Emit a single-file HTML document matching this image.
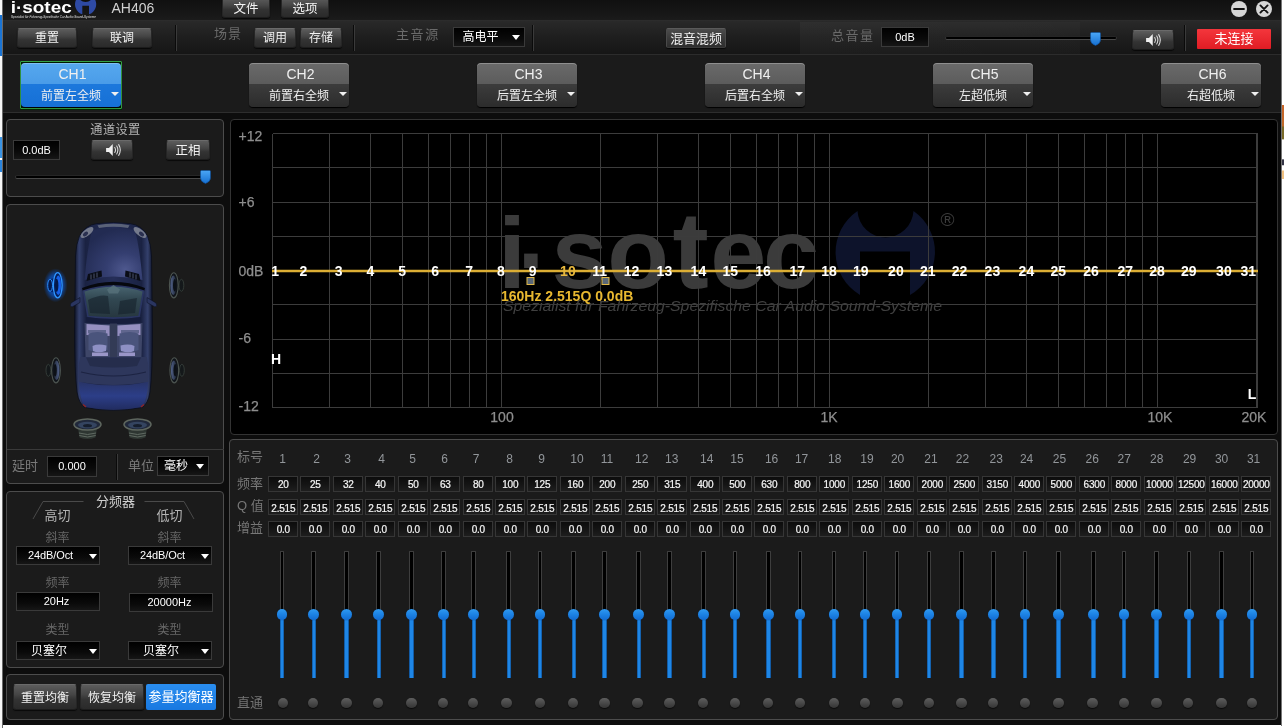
<!DOCTYPE html><html lang="zh"><head><meta charset="utf-8"><title>i-sotec AH406</title><style>
*{box-sizing:border-box;margin:0;padding:0}
html,body{width:1284px;height:728px;overflow:hidden;background:#fff}
body{position:relative;font-family:"Liberation Sans","Noto Sans CJK SC",sans-serif;color:#e8e8e8;font-size:12px}
.a{position:absolute}
#win{left:3px;top:0;width:1278px;height:725px;background:#0d0d0d;overflow:hidden}
#fg{left:0;top:0;width:1279px;height:725px;will-change:transform}
#title{left:0;top:0;width:1279px;height:20px;background:linear-gradient(#101010,#151515 50%,#1b1b1b)}
#tool{left:0;top:20px;width:1279px;height:35px;background:linear-gradient(#292929,#1e1e1e 50%,#161616);border-top:1px solid #2c2c2c;border-bottom:1px solid #2c2c2c}
#chrow{left:0;top:55px;width:1279px;height:58px;background:#1b1b1b;border-bottom:1px solid #2e2e2e}
.btn{position:absolute;border:1px solid #262626;border-top-color:#6a6a6a;border-bottom-color:#1c1c1c;border-radius:3px;background:linear-gradient(#5c5c5c 0%,#454545 40%,#333 60%,#2a2a2a 100%);color:#f2f2f2;text-align:center;font-size:12px;box-shadow:0 1px 1px rgba(0,0,0,.7);white-space:nowrap}
.btn span{position:relative}
.lbl{position:absolute;color:#6a6a6a;font-size:13px;white-space:nowrap}
.box{position:absolute;background:linear-gradient(#000,#0a0a0a 60%,#161616);border:1px solid #3a3a3a;color:#fff;text-align:center;white-space:nowrap}
.sep{position:absolute;width:1px;background:#3a3a3a;box-shadow:-1px 0 0 #0a0a0a}
.panel{position:absolute;background:#1b1b1b;border:1px solid #4c4c4c;border-radius:4px}
.tri{position:absolute;width:0;height:0;border-left:4px solid transparent;border-right:4px solid transparent;border-top:5px solid #fff}
.tri.s{border-left-width:4.2px;border-right-width:4.2px;border-top-width:5.2px}
.ch{position:absolute;width:100px;height:44px;border-radius:4px;background:linear-gradient(#6a6a6a 0,#5c5c5c 47%,#3c3c3c 48%,#2c2c2c 100%);box-shadow:inset 0 1px 0 rgba(255,255,255,.25),0 1px 1px #000;text-align:center;color:#f0f0f0}
.ch .t{position:absolute;left:1.5px;width:100%;top:3px;font-size:14px;line-height:16px}
.ch .s{position:absolute;left:0;width:100%;top:24.5px;font-size:12px;line-height:16px;letter-spacing:0px}
.ch .tri{left:90px;top:29.3px;border-top-color:#f0f0f0;border-left-width:4px;border-right-width:4px;border-top-width:4.6px}
.ch.sel{background:linear-gradient(#56a8ee 0,#4a9ce8 47%,#1c78dc 48%,#1670d6 100%);}
.selbox{position:absolute;border:1px solid #35a045;border-radius:1px;background:#001c00;box-shadow:0 1px 0 #002600}
.cell{position:absolute;width:30px;height:16px;-webkit-text-stroke:0.22px #f4f4f4;background:linear-gradient(#0c0c0c,#141414 50%,#1e1e1e);border:1px solid #363636;color:#f4f4f4;font-size:10px;line-height:14px;padding:0.8px 0 0 0.6px;text-align:center;letter-spacing:-0.2px;white-space:nowrap;overflow:hidden}
.num{position:absolute;width:30px;text-align:center;color:#92969a;font-size:12px;line-height:14px}
.trk{position:absolute;width:4.6px;background:#000;border:0.8px solid #3e3e3e;border-bottom:0;border-radius:1px}
.fill{position:absolute;width:4.5px;background:linear-gradient(90deg,#0b3f7a,#1e86e6 25%,#1e86e6 75%,#0b3f7a)}
.knob{position:absolute;width:10.6px;height:10.6px;border-radius:6px;background:linear-gradient(#2f9af2,#1c82e4 50%,#136cd2);box-shadow:0 0 1px #0a2a55}
.dot{position:absolute;width:10.5px;height:10.5px;border-radius:6px;background:linear-gradient(#5e5e5e,#343434);box-shadow:0 1px 1px rgba(0,0,0,.6)}
.glbl{position:absolute;color:#8a8a8a;font-weight:bold;font-size:12px;white-space:nowrap}
</style></head><body>
<div class="a" style="left:0;top:0;width:3px;height:728px;background:linear-gradient(90deg,#f6f6f6 0,#f6f6f6 66%,#6a6a6a 67%)"></div>
<div class="a" style="left:0;top:15px;width:2px;height:41px;background:#1a74d4"></div>
<div class="a" style="left:0;top:137px;width:2px;height:35px;background:linear-gradient(#3a94e4 0,#3a94e4 60%,#fff 61%,#fff 66%,#2a84dc 67%)"></div>
<div class="a" style="left:1282px;top:105px;width:2px;height:74px;background:linear-gradient(#c86428 0,#c06a2a 28%,#7a6a28 30%,#7a6a28 46%,#fff 47%,#fff 73%,#334 74%,#334 81%,#fff 82%,#fff 88%,#f0c080 89%)"></div>
<div class="a" style="left:1281px;top:0;width:1px;height:726px;background:#777"></div>
<div id="win" class="a"><div id="fg" class="a">
<div id="title" class="a"></div>
<div id="tool" class="a"></div>
<div id="chrow" class="a"></div>
<div class="a" style="left:797px;top:22px;width:280px;height:32px;background:linear-gradient(90deg,rgba(255,255,255,.03),rgba(255,255,255,.02))"></div>
<svg class="a" style="left:0;top:0" width="110" height="20" viewBox="3 0 110 20" font-family="Liberation Sans, sans-serif"><text x="10.7" y="13.1" font-size="16.5" font-weight="bold" fill="#fff" textLength="61" lengthAdjust="spacingAndGlyphs">i·sotec</text><path d="M76.4 -1 A10.6 10.6 0 0 0 82.3 14.3 L82.3 5.7 L89 5.7 L89 14.3 A10.6 10.6 0 0 0 94.800 -1 L91.800 -1 A8 8 0 0 1 79.400 -1Z" fill="#2e4aa4"/><text x="11" y="18" font-size="3.6" font-style="italic" fill="#e0e0e0" textLength="85" lengthAdjust="spacingAndGlyphs">Spezialist für Fahrzeug-Spezifische Car Audio Sound-Systeme</text></svg>
<div class="a" style="left:108.5px;top:-1px;font-size:14px;line-height:18px;color:#d0d0d0">AH406</div>
<div class="btn" style="left:219px;top:-3px;width:48px;height:21px;line-height:22px;font-size:12.5px">文件</div>
<div class="btn" style="left:278px;top:-3px;width:48px;height:21px;line-height:22px;font-size:12.5px">选项</div>
<svg class="a" style="left:1227px;top:0" width="18" height="18" viewBox="0 0 18 18"><circle cx="9" cy="9" r="8" fill="#d6d6d6"/><rect x="3.2" y="8" width="11.6" height="2" rx="0.8" fill="#111"/></svg>
<svg class="a" style="left:1252px;top:0" width="18" height="18" viewBox="0 0 18 18"><circle cx="9" cy="9" r="8" fill="#d6d6d6"/><path d="M5.4 5.4 L12.6 12.6 M12.6 5.4 L5.4 12.6" stroke="#111" stroke-width="1.9" stroke-linecap="round"/></svg>
<div class="btn" style="left:14px;top:28px;width:60px;height:20px;line-height:18px;">重置</div>
<div class="btn" style="left:89px;top:28px;width:60px;height:20px;line-height:18px;">联调</div>
<div class="sep" style="left:173px;top:25px;height:26px"></div>
<div class="lbl" style="left:211px;top:25px;line-height:18px;letter-spacing:1px">场景</div>
<div class="btn" style="left:251px;top:28px;width:42px;height:20px;line-height:18px;">调用</div>
<div class="btn" style="left:297px;top:28px;width:42px;height:20px;line-height:18px;">存储</div>
<div class="sep" style="left:351px;top:25px;height:26px"></div>
<div class="lbl" style="left:393px;top:26px;line-height:18px;letter-spacing:1.6px">主音源</div>
<div class="box" style="left:450px;top:27px;width:72px;height:20px;line-height:19px;font-size:12px;text-align:left;padding-left:8.5px">高电平</div>
<div class="tri" style="left:509px;top:35px"></div>
<div class="sep" style="left:530px;top:25px;height:26px"></div>
<div class="btn" style="left:663px;top:28px;width:60px;height:20px;line-height:18px;border-radius:2px;border-color:#5a5a5a #4a4a4a #3a3a3a #4a4a4a;font-size:12.9px;line-height:20px;background:linear-gradient(#4c4c4c,#3a3a3a 50%,#2e2e2e)">混音混频</div>
<div class="lbl" style="left:828px;top:27px;line-height:18px;letter-spacing:1.5px">总音量</div>
<div class="box" style="left:878px;top:27px;width:48px;height:20px;line-height:18px;font-size:11px">0dB</div>
<div class="a" style="left:942px;top:36px;width:172px;height:4px;background:#000;border-top:1px solid #262626;border-bottom:1px solid #484848;border-left:1px solid #333;border-right:1px solid #333;border-radius:2px"></div>
<svg class="a" style="left:1087.3px;top:31.5px" width="11" height="14" viewBox="0 0 11 14"><defs><linearGradient id="tg1" x1="0" y1="0" x2="0" y2="1"><stop offset="0" stop-color="#4aa6f6"/><stop offset="1" stop-color="#166fd0"/></linearGradient></defs><path d="M1.5 0.5 h8 a1 1 0 0 1 1 1 v6.5 q0 3.6 -5 5.5 q-5 -1.9 -5 -5.5 v-6.500 a1 1 0 0 1 1 -1z" fill="url(#tg1)" stroke="#0d4f9a" stroke-width="0.6"/></svg>
<div class="btn" style="left:1129px;top:30px;width:42px;height:20px;line-height:18px;"></div>
<svg class="a" style="left:1140px;top:33px" width="19.5" height="14" viewBox="-2.5 0 22 14" preserveAspectRatio="none"><path d="M1 5 h3.2 l4.3 -4 v12 l-4.3 -4 h-3.2z" fill="#f0f0f0"/><path d="M10.8 4.5 q1.6 2.5 0 5 M13 3 q2.6 4 0 8 M15.2 1.6 q3.6 5.4 0 10.8" stroke="#e8e8e8" stroke-width="1.1" fill="none" stroke-linecap="round"/></svg>
<div class="sep" style="left:1182px;top:25px;height:26px"></div>
<div class="a" style="left:1194px;top:29px;width:74px;height:20px;background:linear-gradient(#f4363c,#e01c24);border-radius:1px;color:#fff;font-size:13px;line-height:19px;text-align:center;letter-spacing:0px">未连接</div>
<div class="selbox" style="left:17px;top:61px;width:102px;height:48px"></div>
<div class="ch sel" style="left:18px;top:63px"><div class="t">CH1</div><div class="s">前置左全频</div><div class="tri"></div></div>
<div class="ch" style="left:246px;top:63px"><div class="t">CH2</div><div class="s">前置右全频</div><div class="tri"></div></div>
<div class="ch" style="left:474px;top:63px"><div class="t">CH3</div><div class="s">后置左全频</div><div class="tri"></div></div>
<div class="ch" style="left:702px;top:63px"><div class="t">CH4</div><div class="s">后置右全频</div><div class="tri"></div></div>
<div class="ch" style="left:930px;top:63px"><div class="t">CH5</div><div class="s">左超低频</div><div class="tri"></div></div>
<div class="ch" style="left:1158px;top:63px"><div class="t">CH6</div><div class="s">右超低频</div><div class="tri"></div></div>
<div class="panel" style="left:3px;top:119px;width:218px;height:78px"></div>
<div class="a" style="left:3px;top:121px;width:219px;text-align:center;font-size:12.2px;letter-spacing:0.4px;line-height:16px;color:#b4b4b4;padding-top:0.5px">通道设置</div>
<div class="box" style="left:10px;top:140px;width:47px;height:20px;line-height:18px;font-size:11px">0.0dB</div>
<div class="btn" style="left:88px;top:140px;width:42px;height:20px;line-height:18px;"></div>
<svg class="a" style="left:99.5px;top:143px" width="19.5" height="14" viewBox="-2.5 0 22 14" preserveAspectRatio="none"><path d="M1 5 h3.2 l4.3 -4 v12 l-4.3 -4 h-3.2z" fill="#f0f0f0"/><path d="M10.8 4.5 q1.6 2.5 0 5 M13 3 q2.6 4 0 8 M15.2 1.6 q3.6 5.4 0 10.8" stroke="#e8e8e8" stroke-width="1.1" fill="none" stroke-linecap="round"/></svg>
<div class="btn" style="left:163px;top:140px;width:44px;height:20px;line-height:18px;font-size:12.5px;line-height:20px">正相</div>
<div class="a" style="left:12px;top:175px;width:192px;height:4px;background:#000;border-top:1px solid #262626;border-bottom:1px solid #484848;border-left:1px solid #333;border-right:1px solid #333;border-radius:2px"></div>
<svg class="a" style="left:197px;top:170px" width="11" height="14" viewBox="0 0 11 14"><defs><linearGradient id="tg2" x1="0" y1="0" x2="0" y2="1"><stop offset="0" stop-color="#4aa6f6"/><stop offset="1" stop-color="#166fd0"/></linearGradient></defs><path d="M1.5 0.5 h8 a1 1 0 0 1 1 1 v6.5 q0 3.6 -5 5.5 q-5 -1.9 -5 -5.5 v-6.500 a1 1 0 0 1 1 -1z" fill="url(#tg2)" stroke="#0d4f9a" stroke-width="0.6"/></svg>
<div class="panel" style="left:3px;top:204px;width:218px;height:280px"></div>
<div class="a" style="left:4px;top:449px;width:217px;height:1px;background:#3a3a3a"></div>
<svg class="a" style="left:0;top:0" width="225" height="450" viewBox="3 0 225 450">
<defs>
<linearGradient id="cb" x1="0" y1="0" x2="1" y2="0"><stop offset="0" stop-color="#0e1326"/><stop offset="0.06" stop-color="#34406c"/><stop offset="0.14" stop-color="#1a2242"/><stop offset="0.5" stop-color="#252e58"/><stop offset="0.86" stop-color="#1a2242"/><stop offset="0.94" stop-color="#34406c"/><stop offset="1" stop-color="#0e1326"/></linearGradient>
<radialGradient id="ch" cx="0.7" cy="0.8" r="0.8"><stop offset="0" stop-color="#4e588e"/><stop offset="0.4" stop-color="#343e70"/><stop offset="1" stop-color="#222b52"/></radialGradient>
<linearGradient id="ct" x1="0" y1="0" x2="0" y2="1"><stop offset="0" stop-color="#283468"/><stop offset="0.5" stop-color="#2c3e88"/><stop offset="1" stop-color="#212c60"/></linearGradient>
<linearGradient id="cw" x1="0" y1="0" x2="0" y2="1"><stop offset="0" stop-color="#486470"/><stop offset="0.4" stop-color="#324852"/><stop offset="1" stop-color="#26363f"/></linearGradient>
<radialGradient id="sg" cx="0.5" cy="0.5" r="0.5"><stop offset="0" stop-color="#0a5cd8" stop-opacity="1"/><stop offset="0.62" stop-color="#0a54c8" stop-opacity="0.7"/><stop offset="1" stop-color="#0a50c0" stop-opacity="0"/></radialGradient>
<linearGradient id="sc" x1="0" y1="0" x2="1" y2="0"><stop offset="0" stop-color="#1c2432"/><stop offset="1" stop-color="#52628a"/></linearGradient>
<g id="spk">
<path d="M-7.6 -6 L-3.4 -7.4 L-3.4 7.4 L-7.6 6 Z" fill="#14181a"/>
<ellipse cx="-7.6" cy="0" rx="2.4" ry="6" fill="#14181a" stroke="#3a423e" stroke-width="0.8"/>
<ellipse cx="0" cy="0" rx="4.4" ry="12.6" fill="#10141a" stroke="#4c5450" stroke-width="1.1"/>
<ellipse cx="0.5" cy="0" rx="2.9" ry="9.8" fill="url(#sc)"/>
<ellipse cx="-0.9" cy="0" rx="1.7" ry="6.2" fill="#0c1016"/>
</g>
<g id="sub">
<path d="M-9.500 3 L-8 13 Q0 16 8 13 L9.500 3Z" fill="#2e3632"/>
<path d="M-8.600 8.500 Q0 11.500 8.600 8.500 M-8.200 11 Q0 14 8.200 11" stroke="#606a62" stroke-width="1" fill="none"/>
<ellipse cx="0" cy="0" rx="13.500" ry="5.600" fill="#20283a" stroke="#5e665e" stroke-width="1.500"/>
<ellipse cx="0" cy="0.600" rx="9.500" ry="3.400" fill="#344460"/>
<ellipse cx="0" cy="1.200" rx="4.500" ry="1.600" fill="#161e2c"/>
</g>
</defs>
<!-- body -->
<path d="M97 223.600 Q113.500 221.500 130 223.600 Q142 225 147.500 236 Q151 244 151.500 256 L152.500 330 Q152.500 372 150 392 Q148 404 142 407.500 Q113.500 413 85 407.500 Q79 404 77 392 Q74.500 372 74.500 330 L75.500 256 Q76 244 79.500 236 Q85 225 97 223.600Z" fill="url(#cb)" stroke="#0a0e1c" stroke-width="0.8"/>
<!-- hood -->
<path d="M92 230 Q113.500 226.500 135 230 Q140 250 142.500 280 Q113.500 273 84.500 280 Q87 250 92 230Z" fill="url(#ch)"/>
<!-- headlights / grille -->
<ellipse cx="87" cy="232.500" rx="7.800" ry="3.200" transform="rotate(-38 87 232.500)" fill="#747a8c"/>
<ellipse cx="140" cy="232.500" rx="7.800" ry="3.200" transform="rotate(38 140 232.500)" fill="#747a8c"/>
<ellipse cx="85.500" cy="234" rx="3" ry="1.800" transform="rotate(-38 85.500 234)" fill="#2a3050"/>
<ellipse cx="141.500" cy="234" rx="3" ry="1.800" transform="rotate(38 141.500 234)" fill="#2a3050"/>
<path d="M97.500 225.200 Q113.500 222.500 129.500 225.200 L128 228 Q113.500 225.500 99 228Z" fill="#5a6278"/>
<!-- vents -->
<path d="M88 274 L101.500 270.500 L102 276.500 L86.500 281Z" fill="#0a0d16"/>
<path d="M139 274 L125.500 270.500 L125 276.500 L140.500 281Z" fill="#0a0d16"/>
<path d="M91 274.500 v5 M94 273.500 v5 M97 272.500 v5 M136 274.500 v5 M133 273.500 v5 M130 272.500 v5" stroke="#525a76" stroke-width="0.9"/>
<!-- cowl -->
<path d="M82 288 Q113.500 275.500 145 288 L144 291.500 Q113.500 280 83 291.500Z" fill="#06080e"/>
<!-- windshield -->
<path d="M83.500 291 Q113.500 281 143.500 291 L139 316.500 Q113.500 319.500 88 316.500Z" fill="url(#cw)" stroke="#2a3562" stroke-width="1.6" stroke-linejoin="round"/>
<path d="M88 300 Q100 294 108 296 L110 314 L90 313Z M120 301 L137 298 L135 313 L118 314.500Z" fill="#16222c" opacity="0.6"/>
<path d="M107 289.500 L113.500 285 L120 289.500 L118 293.500 L109 293.500Z" fill="#58727a" opacity="0.8"/>
<!-- frame below windshield -->
<path d="M86 317 Q113.500 321 141 317 L140.500 322.500 Q113.500 325.500 86.500 322.500Z" fill="#161d3c"/>
<!-- interior -->
<path d="M84.500 323 Q113.500 326 142.500 323 L141.500 357 L85.500 357Z" fill="#3e4668"/>
<path d="M86.500 324 L109.500 325.500 L109.500 336 L86.500 335Z M117.500 325.500 L140.500 324 L140.500 335 L117.500 336Z" fill="#958fc0"/>
<path d="M88 330 h18 v3 h-18z M121 330 h18 v3 h-18z" fill="#60668e"/>
<!-- seats -->
<path d="M88.500 333.500 Q97 330.500 107.500 333.500 L107.500 350 Q97 353.500 88.500 350Z M119.500 333.500 Q130 330.500 138.500 333.500 L138.500 350 Q130 353.500 119.500 350Z" fill="#4a547c"/>
<path d="M92.500 346 Q98 343.500 106.500 345.500 L106 351 Q98 353.500 93 351Z M120.500 345.500 Q129 343.500 134.500 346 L134 351 Q129 353.500 121 351Z" fill="#8e90c4"/>
<path d="M92 352.500 h16 v3.500 h-16z M119 352.500 h16 v3.500 h-16z" fill="#9a96c8"/>
<path d="M110 323.500 h7 v34 h-7z" fill="#333b56"/>
<!-- rear deck -->
<path d="M80 357 L147 357 Q149.500 370 148 382 Q113.500 388 79 382 Q77.500 370 80 357Z" fill="#2e375c"/>
<path d="M86 357.500 L141 357.500 L137 366 Q113.500 369 90 366Z" fill="#252d4c"/>
<path d="M81 372 Q113.500 380 146 372" stroke="#1c2342" stroke-width="1.200" fill="none"/>
<!-- trunk -->
<path d="M79 382 Q113.500 389 148 382 Q147.500 400 142 407 Q113.500 412.500 85 407 Q79.500 400 79 382Z" fill="url(#ct)"/>
<path d="M83 404.500 l3 2.500 M144 404.500 l-3 2.500" stroke="#902424" stroke-width="1.400"/>
<!-- mirrors -->
<path d="M80 297.500 L71 303 Q69 306 72 307 L80 302.500Z" fill="#2a3560" stroke="#0a0e1c" stroke-width="0.500"/>
<path d="M147 297.500 L156 303 Q158 306 155 307 L147 302.500Z" fill="#2a3560" stroke="#0a0e1c" stroke-width="0.500"/>
<!-- speakers -->
<ellipse cx="55.5" cy="285.300" rx="12" ry="17" fill="url(#sg)"/>
<g transform="translate(57.7,285.300)">
<path d="M-7.600 -6 L-3.400 -7.400 L-3.400 7.400 L-7.600 6 Z" fill="#06256c"/>
<ellipse cx="-7.600" cy="0" rx="2.400" ry="6" fill="#041a50" stroke="#2a8cf8" stroke-width="1"/>
<ellipse cx="0" cy="0" rx="4.400" ry="12.600" fill="#06205c" stroke="#3096ff" stroke-width="1.300"/>
<ellipse cx="0.600" cy="0" rx="2.800" ry="9.800" fill="#1560e8"/>
<ellipse cx="-1" cy="0" rx="1.700" ry="6.500" fill="#041848"/>
</g>
<use href="#spk" transform="translate(173.800,285.300) scale(-1,1)"/>
<use href="#spk" transform="translate(56,370.300)"/>
<use href="#spk" transform="translate(174.300,370.300) scale(-1,1)"/>
<use href="#sub" transform="translate(87.500,424.500)"/>
<use href="#sub" transform="translate(137.500,424.500)"/>
</svg>

<div class="lbl" style="left:9px;top:457px;line-height:18px;color:#7a7a7a">延时</div>
<div class="box" style="left:44px;top:456px;width:50px;height:21px;line-height:19px;font-size:11px">0.000</div>
<div class="sep" style="left:114px;top:454px;height:26px"></div>
<div class="lbl" style="left:125px;top:457px;line-height:18px;color:#7a7a7a">单位</div>
<div class="box" style="left:154px;top:456px;width:52px;height:20px;line-height:18px;font-size:12px;text-align:left;padding-left:6px">毫秒</div>
<div class="tri" style="left:193px;top:464px"></div>
<div class="panel" style="left:3px;top:491px;width:218px;height:177px"></div>
<svg class="a" style="left:3px;top:491px" width="219" height="40" viewBox="0 0 219 40"><path d="M27 28 L37 10.5 H77.5 M138.5 10.5 H178 L188 28" stroke="#4a4a4a" stroke-width="1" fill="none"/></svg>
<div class="a" style="left:3px;top:493px;width:219px;text-align:center;font-size:13px;line-height:18px;color:#d0d0d0">分频器</div>
<div class="a" style="left:24.5px;top:507px;width:60px;text-align:center;font-size:13px;line-height:18px;color:#b4b4b4">高切</div>
<div class="lbl" style="left:24.5px;top:528.5px;width:60px;text-align:center;font-size:12px;line-height:18px;color:#666">斜率</div>
<div class="lbl" style="left:24.5px;top:573.5px;width:60px;text-align:center;font-size:12px;line-height:18px;color:#666">频率</div>
<div class="lbl" style="left:24.5px;top:621px;width:60px;text-align:center;font-size:12px;line-height:18px;color:#666">类型</div>
<div class="a" style="left:136.5px;top:507px;width:60px;text-align:center;font-size:13px;line-height:18px;color:#b4b4b4">低切</div>
<div class="lbl" style="left:136.5px;top:528.5px;width:60px;text-align:center;font-size:12px;line-height:18px;color:#666">斜率</div>
<div class="lbl" style="left:136.5px;top:573.5px;width:60px;text-align:center;font-size:12px;line-height:18px;color:#666">频率</div>
<div class="lbl" style="left:136.5px;top:621px;width:60px;text-align:center;font-size:12px;line-height:18px;color:#666">类型</div>
<div class="box" style="left:13px;top:546px;width:84px;height:19px;line-height:17px;font-size:11px;text-align:left;padding-left:11px;letter-spacing:-0.1px">24dB/Oct</div>
<div class="tri s" style="left:85.6px;top:554.3px"></div>
<div class="box" style="left:13px;top:592px;width:84px;height:19px;line-height:17px;font-size:11px;padding-right:3px">20Hz</div>
<div class="box" style="left:13px;top:641px;width:84px;height:19px;line-height:18px;font-size:12px;text-align:left;padding-left:14px">贝塞尔</div>
<div class="tri s" style="left:85.6px;top:649px"></div>
<div class="box" style="left:125px;top:546px;width:84px;height:19px;line-height:17px;font-size:11px;text-align:left;padding-left:11px;letter-spacing:-0.1px">24dB/Oct</div>
<div class="tri s" style="left:197.6px;top:554.3px"></div>
<div class="box" style="left:126px;top:593px;width:84px;height:19px;line-height:17px;font-size:11px;padding-right:3px">20000Hz</div>
<div class="box" style="left:125px;top:641px;width:84px;height:19px;line-height:18px;font-size:12px;text-align:left;padding-left:14px">贝塞尔</div>
<div class="tri s" style="left:197.6px;top:649px"></div>
<div class="panel" style="left:3px;top:674px;width:218px;height:46px"></div>
<div class="btn" style="left:10px;top:684px;width:64px;height:26px;line-height:24px;line-height:26px">重置均衡</div>
<div class="btn" style="left:77px;top:684px;width:64px;height:26px;line-height:24px;line-height:26px">恢复均衡</div>
<div class="a" style="left:143px;top:684px;width:70px;height:26px;background:linear-gradient(#2a8ef0,#1878e0);border-radius:2px;color:#fff;font-size:13px;line-height:26px;text-align:center;white-space:nowrap">参量均衡器</div>
<div class="panel" style="left:227px;top:119px;width:1048px;height:316px;background:#000;border-color:#333"></div>
<svg class="a" style="left:0;top:0" width="1279" height="725" viewBox="3 0 1279 725" font-family="Liberation Sans, sans-serif">
<g fill="#3b3b3b"><g font-size="101" font-weight="bold" text-anchor="middle"><text x="512" y="288">i</text><text x="533.5" y="293" font-size="96">·</text><text x="579.7" y="288">s</text><text x="638" y="288">o</text><text x="690.6" y="288" font-size="109">t</text><text x="738.3" y="288">e</text><text x="791.1" y="288">c</text></g>
<text x="940.5" y="225.5" font-size="19" fill="#3b3b3b">®</text>
<text x="503" y="311" font-size="15" font-style="italic" fill="#404040" textLength="439" lengthAdjust="spacingAndGlyphs">Spezialist für Fahrzeug-Spezifische Car Audio Sound-Systeme</text></g>
<path d="M857.5 211 A49.7 49.7 0 0 0 860 295 L860 251.5 L910 251.5 L910 295 A49.7 49.7 0 0 0 913.5 211 A28.05 28.05 0 0 1 857.5 211Z" fill="#0d132b"/>
<path d="M272.5 133.5V407.5 M329.5 133.5V407.5 M370.5 133.5V407.5 M402.5 133.5V407.5 M428.5 133.5V407.5 M450.5 133.5V407.5 M469.5 133.5V407.5 M486.5 133.5V407.5 M501.5 133.5V407.5 M600.5 133.5V407.5 M657.5 133.5V407.5 M698.5 133.5V407.5 M730.5 133.5V407.5 M756.5 133.5V407.5 M778.5 133.5V407.5 M797.5 133.5V407.5 M814.5 133.5V407.5 M829.5 133.5V407.5 M928.5 133.5V407.5 M985.5 133.5V407.5 M1026.5 133.5V407.5 M1058.5 133.5V407.5 M1084.5 133.5V407.5 M1106.5 133.5V407.5 M1125.5 133.5V407.5 M1142.5 133.5V407.5 M1157.5 133.5V407.5 M1256.5 133.5V407.5 M1257.5 133.5V407.5 M272.5 133.5H1257.5 M272.5 167.5H1257.5 M272.5 202.5H1257.5 M272.5 236.5H1257.5 M272.5 270.5H1257.5 M272.5 304.5H1257.5 M272.5 339.5H1257.5 M272.5 373.5H1257.5 M272.5 407.5H1257.5" stroke="#3c3c3c" stroke-width="1" fill="none" shape-rendering="crispEdges"/>
<path d="M272 271H1258" stroke="#dcae34" stroke-width="2.6" fill="none"/>
<text x="238.5" y="141" font-size="14" fill="#8e8e8e" stroke="#8e8e8e" stroke-width="0.25">+12</text>
<text x="238.5" y="207" font-size="14" fill="#8e8e8e" stroke="#8e8e8e" stroke-width="0.25">+6</text>
<text x="238.5" y="275.5" font-size="14" fill="#8e8e8e" stroke="#8e8e8e" stroke-width="0.25">0dB</text>
<text x="238.5" y="343" font-size="14" fill="#8e8e8e" stroke="#8e8e8e" stroke-width="0.25">-6</text>
<text x="238.5" y="411" font-size="14" fill="#8e8e8e" stroke="#8e8e8e" stroke-width="0.25">-12</text>
<text x="502" y="421.5" font-size="14" fill="#8e8e8e" stroke="#8e8e8e" stroke-width="0.25" text-anchor="middle">100</text>
<text x="829" y="421.5" font-size="14" fill="#8e8e8e" stroke="#8e8e8e" stroke-width="0.25" text-anchor="middle">1K</text>
<text x="1160" y="421.5" font-size="14" fill="#8e8e8e" stroke="#8e8e8e" stroke-width="0.25" text-anchor="middle">10K</text>
<text x="1254" y="421.5" font-size="14" fill="#8e8e8e" stroke="#8e8e8e" stroke-width="0.25" text-anchor="middle">20K</text>
<g font-size="14" font-weight="bold" text-anchor="middle" fill="#fff">
<text x="275.2" y="276">1</text>
<text x="303.5" y="276">2</text>
<text x="338.7" y="276">3</text>
<text x="370.4" y="276">4</text>
<text x="402.2" y="276">5</text>
<text x="435.1" y="276">6</text>
<text x="469.2" y="276">7</text>
<text x="501.0" y="276">8</text>
<text x="532.7" y="276">9</text>
<text x="567.9" y="276" fill="#e8b83c">10</text>
<text x="599.7" y="276">11</text>
<text x="631.5" y="276">12</text>
<text x="664.4" y="276">13</text>
<text x="698.4" y="276">14</text>
<text x="730.2" y="276">15</text>
<text x="763.1" y="276">16</text>
<text x="797.2" y="276">17</text>
<text x="829.0" y="276">18</text>
<text x="860.7" y="276">19</text>
<text x="895.9" y="276">20</text>
<text x="927.7" y="276">21</text>
<text x="959.5" y="276">22</text>
<text x="992.4" y="276">23</text>
<text x="1026.4" y="276">24</text>
<text x="1058.2" y="276">25</text>
<text x="1091.1" y="276">26</text>
<text x="1125.2" y="276">27</text>
<text x="1157.0" y="276">28</text>
<text x="1188.7" y="276">29</text>
<text x="1223.9" y="276">30</text>
<text x="1248.2" y="276">31</text>
<text x="276" y="363.5" >H</text><text x="1252" y="398.5">L</text>
</g>
<text x="501" y="301" font-size="14" font-weight="bold" fill="#e8b830">160Hz 2.515Q 0.0dB</text>
<rect x="527.0" y="277.5" width="7" height="7" fill="#5a6878" stroke="#e0b848" stroke-width="1"/>
<rect x="602.0" y="277.5" width="7" height="7" fill="#5a6878" stroke="#e0b848" stroke-width="1"/>
</svg>
<div class="panel" style="left:226px;top:439px;width:1049px;height:281px;border-color:#4c4c4c"></div>
<div class="lbl" style="left:234px;top:448px;line-height:18px;color:#777">标号</div>
<div class="lbl" style="left:234px;top:475px;line-height:18px;color:#777">频率</div>
<div class="lbl" style="left:234px;top:497px;line-height:18px;color:#777">Q 值</div>
<div class="lbl" style="left:234px;top:519px;line-height:18px;color:#777">增益</div>
<div class="lbl" style="left:234px;top:694px;line-height:18px;color:#747474">直通</div>
<div class="num" style="left:264.5px;top:451.7px">1</div>
<div class="cell" style="left:265px;top:476px">20</div>
<div class="cell" style="left:265px;top:499px;padding-top:1.5px">2.515</div>
<div class="cell" style="left:265px;top:521px;padding-top:1px">0.0</div>
<div class="trk" style="left:276.80px;top:551px;height:64px"></div>
<div class="fill" style="left:276.85px;top:614px;height:64px"></div>
<div class="knob" style="left:273.80px;top:609.1px"></div>
<div class="dot" style="left:274.75px;top:697.75px"></div>
<div class="num" style="left:298.7px;top:451.7px">2</div>
<div class="cell" style="left:297px;top:476px">25</div>
<div class="cell" style="left:297px;top:499px;padding-top:1.5px">2.515</div>
<div class="cell" style="left:297px;top:521px;padding-top:1px">0.0</div>
<div class="trk" style="left:308.45px;top:551px;height:64px"></div>
<div class="fill" style="left:308.50px;top:614px;height:64px"></div>
<div class="knob" style="left:305.45px;top:609.1px"></div>
<div class="dot" style="left:304.75px;top:697.75px"></div>
<div class="num" style="left:329.5px;top:451.7px">3</div>
<div class="cell" style="left:330px;top:476px">32</div>
<div class="cell" style="left:330px;top:499px;padding-top:1.5px">2.515</div>
<div class="cell" style="left:330px;top:521px;padding-top:1px">0.0</div>
<div class="trk" style="left:341.40px;top:551px;height:64px"></div>
<div class="fill" style="left:341.45px;top:614px;height:64px"></div>
<div class="knob" style="left:338.40px;top:609.1px"></div>
<div class="dot" style="left:338.45px;top:697.75px"></div>
<div class="num" style="left:363.7px;top:451.7px">4</div>
<div class="cell" style="left:362px;top:476px">40</div>
<div class="cell" style="left:362px;top:499px;padding-top:1.5px">2.515</div>
<div class="cell" style="left:362px;top:521px;padding-top:1px">0.0</div>
<div class="trk" style="left:373.45px;top:551px;height:64px"></div>
<div class="fill" style="left:373.50px;top:614px;height:64px"></div>
<div class="knob" style="left:370.45px;top:609.1px"></div>
<div class="dot" style="left:369.75px;top:697.75px"></div>
<div class="num" style="left:394.5px;top:451.7px">5</div>
<div class="cell" style="left:395px;top:476px">50</div>
<div class="cell" style="left:395px;top:499px;padding-top:1.5px">2.515</div>
<div class="cell" style="left:395px;top:521px;padding-top:1px">0.0</div>
<div class="trk" style="left:406.40px;top:551px;height:64px"></div>
<div class="fill" style="left:406.45px;top:614px;height:64px"></div>
<div class="knob" style="left:403.40px;top:609.1px"></div>
<div class="dot" style="left:403.45px;top:697.75px"></div>
<div class="num" style="left:426.6px;top:451.7px">6</div>
<div class="cell" style="left:427px;top:476px">63</div>
<div class="cell" style="left:427px;top:499px;padding-top:1.5px">2.515</div>
<div class="cell" style="left:427px;top:521px;padding-top:1px">0.0</div>
<div class="trk" style="left:438.45px;top:551px;height:64px"></div>
<div class="fill" style="left:438.50px;top:614px;height:64px"></div>
<div class="knob" style="left:435.45px;top:609.1px"></div>
<div class="dot" style="left:434.75px;top:697.75px"></div>
<div class="num" style="left:458.2px;top:451.7px">7</div>
<div class="cell" style="left:460px;top:476px">80</div>
<div class="cell" style="left:460px;top:499px;padding-top:1.5px">2.515</div>
<div class="cell" style="left:460px;top:521px;padding-top:1px">0.0</div>
<div class="trk" style="left:468.45px;top:551px;height:64px"></div>
<div class="fill" style="left:468.50px;top:614px;height:64px"></div>
<div class="knob" style="left:465.45px;top:609.1px"></div>
<div class="dot" style="left:464.75px;top:697.75px"></div>
<div class="num" style="left:491.6px;top:451.7px">8</div>
<div class="cell" style="left:492px;top:476px">100</div>
<div class="cell" style="left:492px;top:499px;padding-top:1.5px">2.515</div>
<div class="cell" style="left:492px;top:521px;padding-top:1px">0.0</div>
<div class="trk" style="left:503.45px;top:551px;height:64px"></div>
<div class="fill" style="left:503.50px;top:614px;height:64px"></div>
<div class="knob" style="left:500.45px;top:609.1px"></div>
<div class="dot" style="left:498.45px;top:697.75px"></div>
<div class="num" style="left:523.7px;top:451.7px">9</div>
<div class="cell" style="left:524px;top:476px">125</div>
<div class="cell" style="left:524px;top:499px;padding-top:1.5px">2.515</div>
<div class="cell" style="left:524px;top:521px;padding-top:1px">0.0</div>
<div class="trk" style="left:534.70px;top:551px;height:64px"></div>
<div class="fill" style="left:534.75px;top:614px;height:64px"></div>
<div class="knob" style="left:531.70px;top:609.1px"></div>
<div class="dot" style="left:531.75px;top:697.75px"></div>
<div class="num" style="left:559.0px;top:451.7px">10</div>
<div class="cell" style="left:557px;top:476px">160</div>
<div class="cell" style="left:557px;top:499px;padding-top:1.5px">2.515</div>
<div class="cell" style="left:557px;top:521px;padding-top:1px">0.0</div>
<div class="trk" style="left:568.45px;top:551px;height:64px"></div>
<div class="fill" style="left:568.50px;top:614px;height:64px"></div>
<div class="knob" style="left:565.45px;top:609.1px"></div>
<div class="dot" style="left:564.75px;top:697.75px"></div>
<div class="num" style="left:589.0px;top:451.7px">11</div>
<div class="cell" style="left:589px;top:476px">200</div>
<div class="cell" style="left:589px;top:499px;padding-top:1.5px">2.515</div>
<div class="cell" style="left:589px;top:521px;padding-top:1px">0.0</div>
<div class="trk" style="left:599.30px;top:551px;height:64px"></div>
<div class="fill" style="left:599.35px;top:614px;height:64px"></div>
<div class="knob" style="left:596.30px;top:609.1px"></div>
<div class="dot" style="left:596.35px;top:697.75px"></div>
<div class="num" style="left:623.7px;top:451.7px">12</div>
<div class="cell" style="left:622px;top:476px">250</div>
<div class="cell" style="left:622px;top:499px;padding-top:1.5px">2.515</div>
<div class="cell" style="left:622px;top:521px;padding-top:1px">0.0</div>
<div class="trk" style="left:633.45px;top:551px;height:64px"></div>
<div class="fill" style="left:633.50px;top:614px;height:64px"></div>
<div class="knob" style="left:630.45px;top:609.1px"></div>
<div class="dot" style="left:629.25px;top:697.75px"></div>
<div class="num" style="left:653.7px;top:451.7px">13</div>
<div class="cell" style="left:654px;top:476px">315</div>
<div class="cell" style="left:654px;top:499px;padding-top:1.5px">2.515</div>
<div class="cell" style="left:654px;top:521px;padding-top:1px">0.0</div>
<div class="trk" style="left:664.30px;top:551px;height:64px"></div>
<div class="fill" style="left:664.35px;top:614px;height:64px"></div>
<div class="knob" style="left:661.30px;top:609.1px"></div>
<div class="dot" style="left:661.35px;top:697.75px"></div>
<div class="num" style="left:688.7px;top:451.7px">14</div>
<div class="cell" style="left:687px;top:476px">400</div>
<div class="cell" style="left:687px;top:499px;padding-top:1.5px">2.515</div>
<div class="cell" style="left:687px;top:521px;padding-top:1px">0.0</div>
<div class="trk" style="left:698.45px;top:551px;height:64px"></div>
<div class="fill" style="left:698.50px;top:614px;height:64px"></div>
<div class="knob" style="left:695.45px;top:609.1px"></div>
<div class="dot" style="left:694.75px;top:697.75px"></div>
<div class="num" style="left:719.0px;top:451.7px">15</div>
<div class="cell" style="left:719px;top:476px">500</div>
<div class="cell" style="left:719px;top:499px;padding-top:1.5px">2.515</div>
<div class="cell" style="left:719px;top:521px;padding-top:1px">0.0</div>
<div class="trk" style="left:729.70px;top:551px;height:64px"></div>
<div class="fill" style="left:729.75px;top:614px;height:64px"></div>
<div class="knob" style="left:726.70px;top:609.1px"></div>
<div class="dot" style="left:726.75px;top:697.75px"></div>
<div class="num" style="left:753.6px;top:451.7px">16</div>
<div class="cell" style="left:751px;top:476px">630</div>
<div class="cell" style="left:751px;top:499px;padding-top:1.5px">2.515</div>
<div class="cell" style="left:751px;top:521px;padding-top:1px">0.0</div>
<div class="trk" style="left:763.40px;top:551px;height:64px"></div>
<div class="fill" style="left:763.45px;top:614px;height:64px"></div>
<div class="knob" style="left:760.40px;top:609.1px"></div>
<div class="dot" style="left:759.65px;top:697.75px"></div>
<div class="num" style="left:783.6px;top:451.7px">17</div>
<div class="cell" style="left:784px;top:476px">800</div>
<div class="cell" style="left:784px;top:499px;padding-top:1.5px">2.515</div>
<div class="cell" style="left:784px;top:521px;padding-top:1px">0.0</div>
<div class="trk" style="left:794.60px;top:551px;height:64px"></div>
<div class="fill" style="left:794.65px;top:614px;height:64px"></div>
<div class="knob" style="left:791.60px;top:609.1px"></div>
<div class="dot" style="left:791.65px;top:697.75px"></div>
<div class="num" style="left:816.8px;top:451.7px">18</div>
<div class="cell" style="left:816px;top:476px">1000</div>
<div class="cell" style="left:816px;top:499px;padding-top:1.5px">2.515</div>
<div class="cell" style="left:816px;top:521px;padding-top:1px">0.0</div>
<div class="trk" style="left:828.70px;top:551px;height:64px"></div>
<div class="fill" style="left:828.75px;top:614px;height:64px"></div>
<div class="knob" style="left:825.70px;top:609.1px"></div>
<div class="dot" style="left:825.75px;top:697.75px"></div>
<div class="num" style="left:848.9px;top:451.7px">19</div>
<div class="cell" style="left:849px;top:476px">1250</div>
<div class="cell" style="left:849px;top:499px;padding-top:1.5px">2.515</div>
<div class="cell" style="left:849px;top:521px;padding-top:1px">0.0</div>
<div class="trk" style="left:859.90px;top:551px;height:64px"></div>
<div class="fill" style="left:859.95px;top:614px;height:64px"></div>
<div class="knob" style="left:856.90px;top:609.1px"></div>
<div class="dot" style="left:856.95px;top:697.75px"></div>
<div class="num" style="left:879.6px;top:451.7px">20</div>
<div class="cell" style="left:881px;top:476px">1600</div>
<div class="cell" style="left:881px;top:499px;padding-top:1.5px">2.515</div>
<div class="cell" style="left:881px;top:521px;padding-top:1px">0.0</div>
<div class="trk" style="left:891.50px;top:551px;height:64px"></div>
<div class="fill" style="left:891.55px;top:614px;height:64px"></div>
<div class="knob" style="left:888.50px;top:609.1px"></div>
<div class="dot" style="left:889.35px;top:697.75px"></div>
<div class="num" style="left:912.9px;top:451.7px">21</div>
<div class="cell" style="left:914px;top:476px">2000</div>
<div class="cell" style="left:914px;top:499px;padding-top:1.5px">2.515</div>
<div class="cell" style="left:914px;top:521px;padding-top:1px">0.0</div>
<div class="trk" style="left:923.50px;top:551px;height:64px"></div>
<div class="fill" style="left:923.55px;top:614px;height:64px"></div>
<div class="knob" style="left:920.50px;top:609.1px"></div>
<div class="dot" style="left:920.55px;top:697.75px"></div>
<div class="num" style="left:944.5px;top:451.7px">22</div>
<div class="cell" style="left:946px;top:476px">2500</div>
<div class="cell" style="left:946px;top:499px;padding-top:1.5px">2.515</div>
<div class="cell" style="left:946px;top:521px;padding-top:1px">0.0</div>
<div class="trk" style="left:956.40px;top:551px;height:64px"></div>
<div class="fill" style="left:956.45px;top:614px;height:64px"></div>
<div class="knob" style="left:953.40px;top:609.1px"></div>
<div class="dot" style="left:953.45px;top:697.75px"></div>
<div class="num" style="left:978.2px;top:451.7px">23</div>
<div class="cell" style="left:979px;top:476px">3150</div>
<div class="cell" style="left:979px;top:499px;padding-top:1.5px">2.515</div>
<div class="cell" style="left:979px;top:521px;padding-top:1px">0.0</div>
<div class="trk" style="left:988.40px;top:551px;height:64px"></div>
<div class="fill" style="left:988.45px;top:614px;height:64px"></div>
<div class="knob" style="left:985.40px;top:609.1px"></div>
<div class="dot" style="left:984.65px;top:697.75px"></div>
<div class="num" style="left:1008.6px;top:451.7px">24</div>
<div class="cell" style="left:1011px;top:476px">4000</div>
<div class="cell" style="left:1011px;top:499px;padding-top:1.5px">2.515</div>
<div class="cell" style="left:1011px;top:521px;padding-top:1px">0.0</div>
<div class="trk" style="left:1019.60px;top:551px;height:64px"></div>
<div class="fill" style="left:1019.65px;top:614px;height:64px"></div>
<div class="knob" style="left:1016.60px;top:609.1px"></div>
<div class="dot" style="left:1016.65px;top:697.75px"></div>
<div class="num" style="left:1041.4px;top:451.7px">25</div>
<div class="cell" style="left:1043px;top:476px">5000</div>
<div class="cell" style="left:1043px;top:499px;padding-top:1.5px">2.515</div>
<div class="cell" style="left:1043px;top:521px;padding-top:1px">0.0</div>
<div class="trk" style="left:1053.30px;top:551px;height:64px"></div>
<div class="fill" style="left:1053.35px;top:614px;height:64px"></div>
<div class="knob" style="left:1050.30px;top:609.1px"></div>
<div class="dot" style="left:1050.35px;top:697.75px"></div>
<div class="num" style="left:1074.3px;top:451.7px">26</div>
<div class="cell" style="left:1076px;top:476px">6300</div>
<div class="cell" style="left:1076px;top:499px;padding-top:1.5px">2.515</div>
<div class="cell" style="left:1076px;top:521px;padding-top:1px">0.0</div>
<div class="trk" style="left:1088.20px;top:551px;height:64px"></div>
<div class="fill" style="left:1088.25px;top:614px;height:64px"></div>
<div class="knob" style="left:1085.20px;top:609.1px"></div>
<div class="dot" style="left:1084.45px;top:697.75px"></div>
<div class="num" style="left:1106.3px;top:451.7px">27</div>
<div class="cell" style="left:1108px;top:476px">8000</div>
<div class="cell" style="left:1108px;top:499px;padding-top:1.5px">2.515</div>
<div class="cell" style="left:1108px;top:521px;padding-top:1px">0.0</div>
<div class="trk" style="left:1118.60px;top:551px;height:64px"></div>
<div class="fill" style="left:1118.65px;top:614px;height:64px"></div>
<div class="knob" style="left:1115.60px;top:609.1px"></div>
<div class="dot" style="left:1115.65px;top:697.75px"></div>
<div class="num" style="left:1138.7px;top:451.7px">28</div>
<div class="cell" style="left:1141px;top:476px">10000</div>
<div class="cell" style="left:1141px;top:499px;padding-top:1.5px">2.515</div>
<div class="cell" style="left:1141px;top:521px;padding-top:1px">0.0</div>
<div class="trk" style="left:1151.40px;top:551px;height:64px"></div>
<div class="fill" style="left:1151.45px;top:614px;height:64px"></div>
<div class="knob" style="left:1148.40px;top:609.1px"></div>
<div class="dot" style="left:1148.45px;top:697.75px"></div>
<div class="num" style="left:1171.6px;top:451.7px">29</div>
<div class="cell" style="left:1173px;top:476px">12500</div>
<div class="cell" style="left:1173px;top:499px;padding-top:1.5px">2.515</div>
<div class="cell" style="left:1173px;top:521px;padding-top:1px">0.0</div>
<div class="trk" style="left:1183.50px;top:551px;height:64px"></div>
<div class="fill" style="left:1183.55px;top:614px;height:64px"></div>
<div class="knob" style="left:1180.50px;top:609.1px"></div>
<div class="dot" style="left:1179.75px;top:697.75px"></div>
<div class="num" style="left:1203.6px;top:451.7px">30</div>
<div class="cell" style="left:1206px;top:476px">16000</div>
<div class="cell" style="left:1206px;top:499px;padding-top:1.5px">2.515</div>
<div class="cell" style="left:1206px;top:521px;padding-top:1px">0.0</div>
<div class="trk" style="left:1216.30px;top:551px;height:64px"></div>
<div class="fill" style="left:1216.35px;top:614px;height:64px"></div>
<div class="knob" style="left:1213.30px;top:609.1px"></div>
<div class="dot" style="left:1213.35px;top:697.75px"></div>
<div class="num" style="left:1235.6px;top:451.7px">31</div>
<div class="cell" style="left:1238px;top:476px">20000</div>
<div class="cell" style="left:1238px;top:499px;padding-top:1.5px">2.515</div>
<div class="cell" style="left:1238px;top:521px;padding-top:1px">0.0</div>
<div class="trk" style="left:1246.90px;top:551px;height:64px"></div>
<div class="fill" style="left:1246.95px;top:614px;height:64px"></div>
<div class="knob" style="left:1243.90px;top:609.1px"></div>
<div class="dot" style="left:1243.75px;top:697.75px"></div>
</div></div></body></html>
